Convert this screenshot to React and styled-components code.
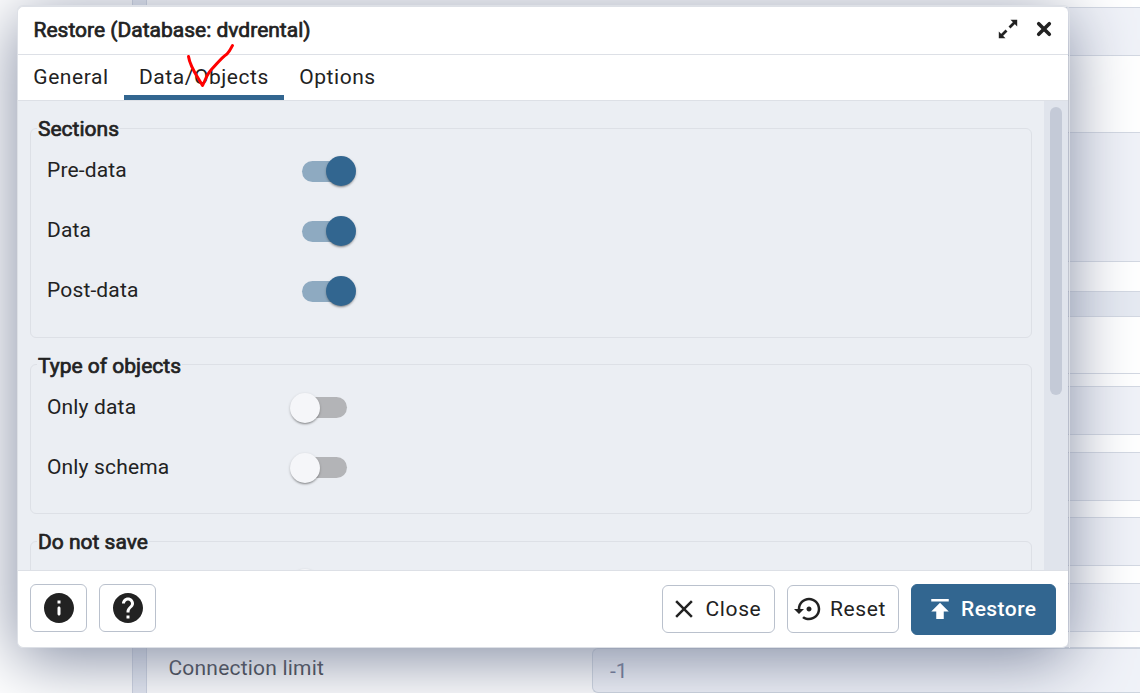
import React from 'react';
import styled, { createGlobalStyle, css } from 'styled-components';

const Global = createGlobalStyle`
  *, *::before, *::after { box-sizing: border-box; }
  html, body { margin: 0; overflow: hidden; }
  body { font-family: Roboto, "Liberation Sans", sans-serif; font-size: 21px; color: #222; background: #fff; }
`;

const Page = styled.div`
  position: relative;
  width: 1140px;
  height: 693px;
  overflow: hidden;
  background: #fff;
`;

const Backdrop = styled.div`
  display: grid;
  grid-template-columns: 132px 15px 1fr;
  height: 100%;
`;

const TreePane = styled.div`
  background: #fff;
`;

const Splitter = styled.div`
  background: #e4e8f1;
  border: solid #ccd2df;
  border-width: 0 1px 0 1px;
`;

const Form = styled.div`
  display: flex;
  flex-direction: column;
`;

const Band = styled.div`
  flex: none;
  height: ${(p) => p.$h}px;
  background: ${(p) => p.$bg || '#fff'};
  border-bottom: 1px solid #d3d8e2;
`;

const FieldRow = styled.div`
  display: grid;
  grid-template-columns: 445px 1fr;
  flex: none;
  height: 45px;
`;

const FieldLabel = styled.label`
  padding: 8px 0 0 21.5px;
  line-height: 24px;
  letter-spacing: 0.2px;
  color: #30333b;
`;

const FieldInput = styled.div`
  padding: 10px 0 0 17px;
  line-height: 24px;
  color: #646d8a;
  background: #f0f2f8;
  border: 1px solid #ced5df;
  border-right: 0;
  border-radius: 6px 0 0 6px;
`;

const Frame = styled.div`
  position: absolute;
  left: 17px;
  top: 5px;
  width: 1053px;
  height: 643px;
  border: solid #dde0e6;
  border-width: 1px 1px 0 0;
  border-radius: 6px 6px 0 0;
`;

const Dialog = styled.section`
  position: absolute;
  left: 17px;
  top: 6px;
  width: 1051px;
  height: 642px;
  display: flex;
  flex-direction: column;
  background: #fff;
  border: 1px solid #dde0e6;
  border-right: 0;
  border-radius: 6px;
  box-shadow: 0 11px 66px #7f889f;
  overflow: hidden;
`;

const Header = styled.header`
  display: flex;
  align-items: center;
  flex: none;
  height: 48px;
  padding: 0 16px 2px 15.5px;
  border-bottom: 1px solid #dde0e6;
`;

const bold = css`
  font-weight: 400;
  -webkit-text-stroke: 0.7px currentColor;
`;

const Title = styled.h1`
  ${bold}
  flex: 1;
  margin: 0;
  font-size: 21px;
  line-height: 24px;
`;

const HeaderIcons = styled.div`
  display: flex;
  align-items: center;
  gap: 18px;
  padding-bottom: 1px;
  svg { display: block; }
`;

const Tabs = styled.nav`
  display: flex;
  flex: none;
  height: 46px;
  border-bottom: 1px solid #dde0e6;
`;

const Tab = styled.div`
  padding: 10px 15px 0 15.3px;
  line-height: 24px;
  letter-spacing: 0.56px;
  border-bottom: 5px solid ${(p) => (p.$active ? '#326690' : 'transparent')};
`;

const Body = styled.div`
  display: flex;
  flex: 1;
  min-height: 0;
  background: #ebeef3;
`;

const Content = styled.div`
  flex: 1;
  padding: 14px 12px 0;
  overflow: hidden;
`;

const Track = styled.div`
  width: 24px;
  padding: 6px;
  background: #e0e4ec;
`;

const Thumb = styled.div`
  width: 12px;
  height: 288px;
  border-radius: 6px;
  background: #c4cad7;
`;

const Group = styled.fieldset`
  min-width: 0;
  height: ${(p) => p.$h}px;
  margin: 0 0 ${(p) => p.$gap}px;
  padding: 0;
  border: 1px solid #dde0e6;
  border-radius: 6px;
`;

const Legend = styled.legend`
  ${bold}
  margin-left: 6px;
  padding: ${(p) => p.$drop || 2}px 1px 0;
  line-height: 24px;
`;

const Row = styled.div`
  display: grid;
  grid-template-columns: 243px 1fr;
  height: 60px;
  padding: 17px 0 0 16px;
  line-height: 24px;
  letter-spacing: 0.15px;
`;

const SwitchBox = styled.span`
  display: flex;
  align-items: flex-start;
  width: 45px;
  height: 21px;
  margin: ${(p) => (p.$on ? 3 : 2)}px 0 0 12px;
  border-radius: 11px;
  background: ${(p) => (p.$on ? '#8eaac1' : '#b3b4b7')};
`;

const Knob = styled.span`
  flex: none;
  width: 30px;
  height: 30px;
  margin-top: ${(p) => (p.$on ? -5 : -4)}px;
  margin-left: ${(p) => (p.$on ? 24 : -12)}px;
  border-radius: 50%;
  background: ${(p) => (p.$on ? '#326690' : '#f5f6f9')};
  box-shadow: 0 2px 2px -1px rgba(0,0,0,.3), 0 1px 3px rgba(0,0,0,.2);
`;

const Footer = styled.footer`
  display: flex;
  align-items: center;
  flex: none;
  height: 77px;
  padding: 0 12px;
  gap: 12px;
  border-top: 1px solid #dde0e6;
`;

const IconButtons = styled.div`
  display: flex;
  flex: 1;
  gap: 12px;
  padding-bottom: 2px;
`;

const Button = styled.button`
  display: flex;
  align-items: center;
  flex: none;
  width: ${(p) => p.$w}px;
  height: 48px;
  padding: 0 0 0 ${(p) => p.$pad}px;
  gap: ${(p) => p.$gap || 0}px;
  font: inherit;
  letter-spacing: 0.63px;
  color: #222;
  background: #fff;
  border: 1px solid #bac1cd;
  border-radius: 6px;
  ${(p) => p.$primary && css`
    height: 51px;
    color: #fff;
    background: #326690;
    border-color: #326690;
    font-weight: 500;
    letter-spacing: 0.45px;
  `}
  svg { display: block; flex: none; }
`;

const Tick = styled.svg`
  position: absolute;
  left: 180px;
  top: 40px;
`;

const Switch = ({ label, on }) => (
  <Row>
    <span>{label}</span>
    <SwitchBox $on={on}><Knob $on={on} /></SwitchBox>
  </Row>
);

const MIcon = ({ d, size = 30 }) => (
  <svg width={size} height={size} viewBox="0 0 24 24" fill="currentColor"><path d={d} /></svg>
);

const CLOSE = 'M19 6.41L17.59 5 12 10.59 6.41 5 5 6.41 10.59 12 5 17.59 6.41 19 12 13.41 17.59 19 19 17.59 13.41 12z';
const INFO = 'M12 2C6.48 2 2 6.48 2 12s4.48 10 10 10 10-4.48 10-10S17.52 2 12 2zm0 15c-.55 0-1-.45-1-1v-4c0-.55.45-1 1-1s1 .45 1 1v4c0 .55-.45 1-1 1zm1-8h-2V7h2v2z';
const HELP = 'M12 2C6.48 2 2 6.48 2 12s4.48 10 10 10 10-4.48 10-10S17.52 2 12 2zm1 17h-2v-2h2v2zm2.07-7.75l-.9.92C13.45 12.9 13 13.5 13 15h-2v-.5c0-1.1.45-2.1 1.17-2.83l1.24-1.26c.37-.36.59-.86.59-1.41 0-1.1-.9-2-2-2s-2 .9-2 2H8c0-2.21 1.79-4 4-4s4 1.79 4 4c0 .88-.36 1.68-.93 2.25z';
const RESET = 'M14 12c0-1.1-.9-2-2-2s-2 .9-2 2 .9 2 2 2 2-.9 2-2zm-2-9c-4.97 0-9 4.03-9 9H0l4 4 4-4H5c0-3.87 3.13-7 7-7s7 3.13 7 7-3.13 7-7 7c-1.51 0-2.91-.49-4.06-1.3l-1.42 1.44C8.04 20.3 9.94 21 12 21c4.97 0 9-4.03 9-9s-4.03-9-9-9z';
const PUBLISH = 'M5 4v2h14V4H5zm0 10h4v6h6v-6h4l-7-7-7 7z';

const INPUT = '#f0f2f8';
const BANDS = [
  [8], [48, INPUT], [77], [129, INPUT], [30], [25, '#e6eaf2'], [57], [13],
  [48, INPUT], [18], [48, INPUT], [17], [48, INPUT], [18], [48, INPUT], [16],
];

export default function App() {
  return (
    <Page>
      <Global />
      <Backdrop>
        <TreePane />
        <Splitter />
        <Form>
          {BANDS.map(([h, bg], i) => <Band key={i} $h={h} $bg={bg} />)}
          <FieldRow>
            <FieldLabel>Connection limit</FieldLabel>
            <FieldInput>-1</FieldInput>
          </FieldRow>
        </Form>
      </Backdrop>
      <Dialog>
        <Header>
          <Title>Restore (Database: dvdrental)</Title>
          <HeaderIcons>
            <svg width="20" height="20" viewBox="0 0 20 20" fill="#222" stroke="#222">
              <path d="M12.500 .800H19.200V7.500zM.800 12.500V19.200H7.500z" stroke="none" />
              <path d="M16.500 3.500l-5 5M3.500 16.500l5-5" strokeWidth="2.800" />
            </svg>
            <svg width="16" height="16" viewBox="0 0 16 16" stroke="#222" strokeWidth="3.600" strokeLinecap="round">
              <path d="M2.700 2.700l10.600 10.600M13.300 2.700L2.700 13.300" />
            </svg>
          </HeaderIcons>
        </Header>
        <Tabs>
          <Tab>General</Tab>
          <Tab $active>Data/Objects</Tab>
          <Tab>Options</Tab>
        </Tabs>
        <Body>
          <Content>
            <Group $h={223} $gap={13}>
              <Legend>Sections</Legend>
              <Switch label="Pre-data" on />
              <Switch label="Data" on />
              <Switch label="Post-data" on />
            </Group>
            <Group $h={163} $gap={14}>
              <Legend $drop={3}>Type of objects</Legend>
              <Switch label="Only data" />
              <Switch label="Only schema" />
            </Group>
            <Group $h={163} $gap={14}>
              <Legend>Do not save</Legend>
              <Switch />
            </Group>
          </Content>
          <Track><Thumb /></Track>
        </Body>
        <Footer>
          <IconButtons>
            <Button $w={57} $pad={10}><MIcon d={INFO} size={36} /></Button>
            <Button $w={57} $pad={10}><MIcon d={HELP} size={36} /></Button>
          </IconButtons>
          <Button $w={113} $pad={6} $gap={6.5}><MIcon d={CLOSE} />Close</Button>
          <Button $w={112} $pad={6} $gap={6}><MIcon d={RESET} />Reset</Button>
          <Button $w={145} $pad={13} $gap={6} $primary><MIcon d={PUBLISH} />Restore</Button>
        </Footer>
      </Dialog>
      <Frame />
      <Tick width="60" height="52" viewBox="180 40 60 52" fill="none" stroke="#f00" strokeWidth="3" strokeLinecap="round" strokeLinejoin="round">
        <path d="M188.500 56.500C190 67 197 76 202.500 85.500C206 79 207 74 211 70C217 64 221 58 227 54C230 51 231 48 232.500 45.500" />
      </Tick>
    </Page>
  );
}
